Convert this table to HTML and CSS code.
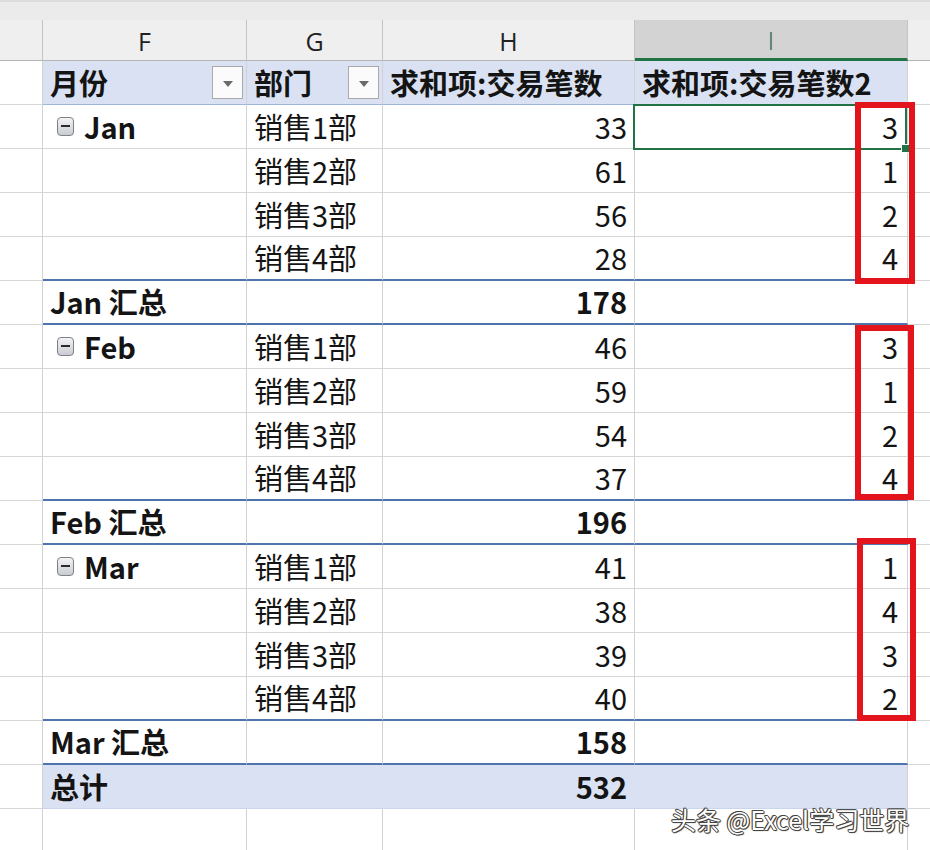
FILE: index.html
```html
<!DOCTYPE html>
<html lang="zh-CN">
<head>
<meta charset="utf-8">
<title>数据透视表</title>
<link rel="stylesheet" href="styles.css">
</head>
<body>
<div class="sheet">
  <div class="topstrip"></div>
  <div class="row colhead">
    <div class="ch"></div>
    <div class="ch">F</div>
    <div class="ch">G</div>
    <div class="ch">H</div>
    <div class="ch active">I</div>
    <div class="ch last"></div>
  </div>

  <div class="row phead">
    <div class="c e"></div>
    <div class="c p b hd">月份<span class="dd"></span></div>
    <div class="c p b hd">部门<span class="dd"></span></div>
    <div class="c p b">求和项:交易笔数</div>
    <div class="c p b">求和项:交易笔数2</div>
    <div class="c e"></div>
  </div>

  <div class="row">
    <div class="c e"></div>
    <div class="c m b"><span class="cb"></span>Jan</div>
    <div class="c">销售1部</div>
    <div class="c n">33</div>
    <div class="c n ni">3</div>
    <div class="c e"></div>
  </div>
  <div class="row">
    <div class="c e"></div><div class="c"></div><div class="c">销售2部</div><div class="c n">61</div><div class="c n ni">1</div><div class="c e"></div>
  </div>
  <div class="row">
    <div class="c e"></div><div class="c"></div><div class="c">销售3部</div><div class="c n">56</div><div class="c n ni">2</div><div class="c e"></div>
  </div>
  <div class="row gl">
    <div class="c e"></div><div class="c"></div><div class="c">销售4部</div><div class="c n">28</div><div class="c n ni">4</div><div class="c e"></div>
  </div>
  <div class="row sub">
    <div class="c e"></div><div class="c b">Jan 汇总</div><div class="c"></div><div class="c n b">178</div><div class="c"></div><div class="c e"></div>
  </div>

  <div class="row">
    <div class="c e"></div>
    <div class="c m b"><span class="cb"></span>Feb</div>
    <div class="c">销售1部</div>
    <div class="c n">46</div>
    <div class="c n ni">3</div>
    <div class="c e"></div>
  </div>
  <div class="row">
    <div class="c e"></div><div class="c"></div><div class="c">销售2部</div><div class="c n">59</div><div class="c n ni">1</div><div class="c e"></div>
  </div>
  <div class="row">
    <div class="c e"></div><div class="c"></div><div class="c">销售3部</div><div class="c n">54</div><div class="c n ni">2</div><div class="c e"></div>
  </div>
  <div class="row gl">
    <div class="c e"></div><div class="c"></div><div class="c">销售4部</div><div class="c n">37</div><div class="c n ni">4</div><div class="c e"></div>
  </div>
  <div class="row sub">
    <div class="c e"></div><div class="c b">Feb 汇总</div><div class="c"></div><div class="c n b">196</div><div class="c"></div><div class="c e"></div>
  </div>

  <div class="row">
    <div class="c e"></div>
    <div class="c m b"><span class="cb"></span>Mar</div>
    <div class="c">销售1部</div>
    <div class="c n">41</div>
    <div class="c n ni">1</div>
    <div class="c e"></div>
  </div>
  <div class="row">
    <div class="c e"></div><div class="c"></div><div class="c">销售2部</div><div class="c n">38</div><div class="c n ni">4</div><div class="c e"></div>
  </div>
  <div class="row">
    <div class="c e"></div><div class="c"></div><div class="c">销售3部</div><div class="c n">39</div><div class="c n ni">3</div><div class="c e"></div>
  </div>
  <div class="row gl">
    <div class="c e"></div><div class="c"></div><div class="c">销售4部</div><div class="c n">40</div><div class="c n ni">2</div><div class="c e"></div>
  </div>
  <div class="row sub">
    <div class="c e"></div><div class="c b">Mar 汇总</div><div class="c"></div><div class="c n b">158</div><div class="c"></div><div class="c e"></div>
  </div>

  <div class="row total">
    <div class="c e"></div><div class="c b">总计</div><div class="c"></div><div class="c n b">532</div><div class="c"></div><div class="c e"></div>
  </div>
  <div class="row">
    <div class="c e"></div><div class="c"></div><div class="c"></div><div class="c"></div><div class="c"></div><div class="c e"></div>
  </div>

  <div class="sel"><span class="handle"></span></div>
  <div class="redbox rb1"></div>
  <div class="redbox rb2"></div>
  <div class="redbox rb3"></div>
  <div class="wm">头条 @Excel学习世界</div>
</div>
</body>
</html>
```

FILE: styles.css
```css
html, body {
  margin: 0;
  padding: 0;
  background: #ffffff;
}
body {
  width: 930px;
  height: 850px;
  overflow: hidden;
  font-family: "Noto Sans CJK SC", "Noto Sans", sans-serif;
  color: #1a1a1a;
}
.sheet {
  position: relative;
  width: 930px;
  height: 850px;
  overflow: hidden;
}
.topstrip {
  height: 20px;
  background: #ebebeb;
  border-top: 2px solid #dcdcdc;
  box-sizing: border-box;
}
.row {
  display: grid;
  grid-template-columns: 43px 204px 136px 252px 273px 22px;
  height: 44px;
}
.colhead {
  height: 41px;
  background: #efefef;
}
.ch {
  display: flex;
  align-items: center;
  justify-content: center;
  box-sizing: border-box;
  border-right: 1px solid #c4c4c4;
  border-bottom: 1px solid #b5b5b5;
  font-family: "Open Sans", "Noto Sans", sans-serif;
  font-size: 25px;
  color: #222;
  padding-top: 2px;
}
.ch.active {
  background: #d3d3d3;
  border-bottom: 3px solid #217346;
  color: #21614a;
  font-weight: 300;
}
.ch.last {
  border-right: none;
}
.c {
  display: flex;
  align-items: center;
  box-sizing: border-box;
  border-right: 1px solid #d2d2d2;
  border-bottom: 1px solid #d6d6d6;
  padding: 0 7px 2px 7px;
  font-size: 29px;
  white-space: nowrap;
  overflow: hidden;
  color: #141414;
}
.c.e {
  padding: 0;
}
.row .c:last-child {
  border-right: none;
}
.b {
  font-weight: 700;
}
.n {
  justify-content: flex-end;
}
.ni {
  padding-right: 9px;
}
.phead .p {
  background: #d9e1f2;
  border-bottom: 1px solid #9fb5da;
}
.hd {
  padding-right: 3px;
}
.dd {
  margin-left: auto;
  width: 31px;
  height: 33px;
  box-sizing: border-box;
  border: 1px solid #a9a9a9;
  background: #fbfbfb;
  display: flex;
  align-items: center;
  justify-content: center;
  margin-top: 2px;
  flex: none;
}
.dd::after {
  content: "";
  width: 0;
  height: 0;
  border-left: 5px solid transparent;
  border-right: 5px solid transparent;
  border-top: 6px solid #6a6a6a;
  margin-top: 2px;
}
.m {
  padding-left: 14px;
}
.cb {
  width: 17px;
  height: 19px;
  box-sizing: border-box;
  border: 1px solid #7f8185;
  border-radius: 4px;
  background: linear-gradient(#f2f3f5, #c9ccd2);
  margin-right: 10px;
  margin-top: 2px;
  position: relative;
  flex: none;
}
.cb::after {
  content: "";
  position: absolute;
  left: 3px;
  right: 3px;
  top: 7px;
  height: 2px;
  background: #2a2a2a;
}
.gl .c:not(.e),
.sub .c:not(.e) {
  border-bottom: 2px solid #4f74ad;
}
.total .c:not(.e) {
  background: #d9e1f2;
  border-bottom: 1px solid #c9d5ea;
}
.total .c:nth-child(2),
.total .c:nth-child(3),
.total .c:nth-child(4) {
  border-right-color: #d9e1f2;
}
.sel {
  position: absolute;
  left: 633px;
  top: 104px;
  width: 274px;
  height: 46px;
  box-sizing: border-box;
  border: 2px solid #217346;
}
.handle {
  position: absolute;
  right: -5px;
  bottom: -5px;
  width: 7px;
  height: 7px;
  background: #217346;
  border: 1px solid #ffffff;
}
.redbox {
  position: absolute;
  box-sizing: border-box;
  border: 6px solid #e3141c;
}
.rb1 {
  left: 855px;
  top: 102px;
  width: 60px;
  height: 182px;
}
.rb2 {
  left: 855px;
  top: 325px;
  width: 59px;
  height: 175px;
}
.rb3 {
  left: 857px;
  top: 538px;
  width: 59px;
  height: 183px;
}
.wm {
  position: absolute;
  left: 671px;
  top: 801px;
  font-size: 25px;
  color: #ffffff;
  text-shadow:
    1px 0 0 #444, -1px 0 0 #444, 0 1px 0 #444, 0 -1px 0 #444,
    1px 1px 1px #333, -1px -1px 0 #555;
  white-space: nowrap;
}
```
